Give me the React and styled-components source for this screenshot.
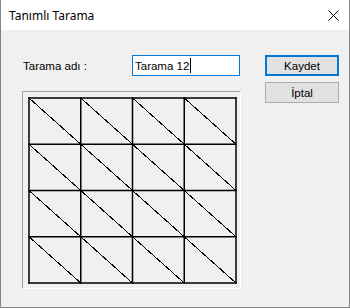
import React from 'react'
import styled, { createGlobalStyle } from 'styled-components'

const GlobalStyle = createGlobalStyle`
  html, body {
    margin: 0;
    padding: 0;
    background: #f0f0f0;
  }
  * {
    box-sizing: border-box;
  }
`

const COLS = [6, 57.75, 109.5, 161.25, 213]
const ROWS = [6, 52.25, 98.5, 144.75, 191]

const App = () => {
  return (
    <>
      <GlobalStyle />
      <Window>
        <TitleBar>
          <Title>Tanımlı Tarama</Title>
          <CloseButton>
            <svg width="11" height="11" viewBox="0 0 11 11">
              <path d="M0.5 0.5 L10.5 10.5 M10.5 0.5 L0.5 10.5" stroke="#000" strokeWidth="1" fill="none" />
            </svg>
          </CloseButton>
        </TitleBar>

        <Body>
          <LeftColumn>
            <FormRow>
              <Label>Tarama adı :</Label>
              <TextBox>
                Tarama 12<Caret />
              </TextBox>
            </FormRow>

            <Preview>
              <svg width="217" height="196" viewBox="0 0 217 196">
                {ROWS.slice(0, 4).map((y, j) =>
                  COLS.slice(0, 4).map((x, i) => (
                    <line
                      key={`d${i}-${j}`}
                      x1={x}
                      y1={y}
                      x2={COLS[i + 1]}
                      y2={ROWS[j + 1]}
                      stroke="#000"
                      strokeWidth="1"
                      shapeRendering="crispEdges"
                    />
                  ))
                )}
                {COLS.map((x) => (
                  <line key={`v${x}`} x1={x} y1={ROWS[0] - 0.75} x2={x} y2={ROWS[4] + 0.75} stroke="#000" strokeWidth="1.5" />
                ))}
                {ROWS.map((y) => (
                  <line key={`h${y}`} x1={COLS[0] - 0.75} y1={y} x2={COLS[4] + 0.75} y2={y} stroke="#000" strokeWidth="1.5" />
                ))}
              </svg>
            </Preview>
          </LeftColumn>

          <ButtonColumn>
            <Button primary>Kaydet</Button>
            <Button>İptal</Button>
          </ButtonColumn>
        </Body>
      </Window>
    </>
  )
}

export default App

const Window = styled.div`
  width: 350px;
  height: 308px;
  display: flex;
  flex-direction: column;
  border: 1px solid #858585;
  border-top: none;
  background: #f0f0f0;
`

const TitleBar = styled.div`
  height: 30px;
  background: #fff;
  display: flex;
  align-items: center;
  justify-content: space-between;
  padding: 0 10px 0 8px;
`

const Title = styled.span`
  font-family: 'Noto Sans', sans-serif;
  font-size: 12px;
  color: #000;
  margin-top: 1px;
`

const CloseButton = styled.div`
  width: 11px;
  height: 11px;
  display: flex;
  svg {
    display: block;
  }
`

const Body = styled.div`
  flex: 1;
  display: flex;
  padding: 25px 0 0 21px;
  font-family: 'Liberation Sans', Arial, sans-serif;
  font-size: 11px;
  color: #000;
`

const LeftColumn = styled.div`
  width: 219px;
  display: flex;
  flex-direction: column;
`

const FormRow = styled.div`
  display: flex;
  align-items: center;
  height: 21px;
`

const Label = styled.span`
  width: 110px;
  padding-left: 1px;
  font-size: 11.5px;
`

const TextBox = styled.div`
  width: 108px;
  height: 21px;
  border: 1px solid #0078d7;
  background: #fff;
  display: flex;
  align-items: center;
  padding-left: 2px;
  font-size: 11.5px;
`

const Caret = styled.span`
  display: inline-block;
  width: 1px;
  height: 15px;
  background: #000;
  margin-left: 1px;
`

const Preview = styled.div`
  margin-top: 15px;
  width: 219px;
  height: 198px;
  border: 1px solid;
  border-color: #a0a0a0 #fff #fff #a0a0a0;
  svg {
    display: block;
  }
`

const ButtonColumn = styled.div`
  display: flex;
  flex-direction: column;
  gap: 6px;
  margin-left: 24px;
`

const Button = styled.div`
  width: 74px;
  height: 21px;
  display: flex;
  align-items: center;
  justify-content: center;
  background: #e1e1e1;
  border: ${(p) => (p.primary ? '2px solid #0078d7' : '1px solid #adadad')};
  font-size: 11.5px;
`
